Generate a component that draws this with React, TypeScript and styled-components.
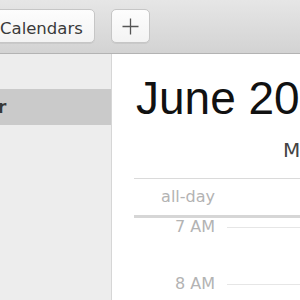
import styled, { createGlobalStyle } from "styled-components";

const GlobalStyle = createGlobalStyle`
    html, body {
        margin: 0;
        padding: 0;
        overflow: hidden;
        background: #fff;
    }
`

const Window = styled.div`
    width: 300px;
    height: 300px;
    overflow: hidden;
    display: flex;
    flex-direction: column;
    font-family: "DejaVu Sans", sans-serif;
`

const Toolbar = styled.div`
    height: 54px;
    flex-shrink: 0;
    display: flex;
    align-items: flex-start;
    gap: 16px;
    padding-top: 9px;
    box-sizing: border-box;
    background: linear-gradient(#e6e6e6, #d3d3d3);
    border-bottom: 1px solid #b3b3b3;
`

const ToolbarButton = styled.button<{ $shift?: number }>`
    height: 34px;
    box-sizing: border-box;
    margin: 0 0 0 ${p => p.$shift ?? 0}px;
    padding: 5px 11px 0;
    border: 1px solid #c6c6c6;
    border-radius: 5px;
    background: linear-gradient(#fdfdfd, #f3f3f3);
    box-shadow: 0 1px 0 rgba(0, 0, 0, .06);
    font-family: "DejaVu Sans", sans-serif;
    font-size: 16.5px;
    line-height: 27px;
    color: #3a3a3a;
    white-space: nowrap;
`

const IconButton = styled(ToolbarButton)`
    width: 39px;
    padding: 0;
    display: flex;
    align-items: center;
    justify-content: center;
`

const Body = styled.div`
    flex: 1;
    display: flex;
    min-height: 0;
`

const Sidebar = styled.div`
    width: 111px;
    flex-shrink: 0;
    padding-top: 35px;
    background: #ededed;
    border-right: 1px solid #d6d6d6;
    overflow: hidden;
`

const SidebarRow = styled.div<{ $selected?: boolean }>`
    height: 36px;
    line-height: 36px;
    background: ${p => p.$selected ? "#cacaca" : "transparent"};
    white-space: nowrap;
`

const SidebarLabel = styled.span`
    display: inline-block;
    margin-left: -84px;
    font-size: 18px;
    font-weight: 700;
    color: #383838;
`

const Main = styled.div`
    flex: 1;
    min-width: 0;
    padding-left: 22px;
    background: #fff;
    overflow: hidden;
`

const Title = styled.h1`
    margin: 21px 0 0 2px;
    font-family: "Liberation Sans", Arial, sans-serif;
    font-size: 46px;
    font-weight: 400;
    line-height: 46px;
    color: #111;
    white-space: nowrap;
`

const DayHeader = styled.div`
    margin-top: 19px;
    padding-left: 149px;
    font-size: 20px;
    line-height: 20px;
    color: #444;
    white-space: nowrap;
`

const Grid = styled.div`
    margin-top: 18px;
    border-top: 1px solid #dadada;
`

const AllDayRow = styled.div`
    height: 36px;
    display: flex;
    border-bottom: 3px solid #d6d6d6;
`

const TimeLabel = styled.div`
    width: 81px;
    flex-shrink: 0;
    text-align: right;
    font-size: 16px;
    color: #b3b3b3;
    white-space: nowrap;
`

const AllDayLabel = styled(TimeLabel)`
    line-height: 36px;
`

const HourList = styled.div`
    padding-top: 9px;
`

const HourRow = styled.div`
    height: 57px;
    display: flex;
    align-items: flex-start;
`

const HourLabel = styled(TimeLabel)`
    line-height: 16px;
    margin-top: -8px;
`

const HourSlot = styled.div`
    flex: 1;
    height: 100%;
    margin-left: 12px;
    border-top: 1px solid #e6e6e6;
`

const hours = ["7 AM", "8 AM"];

function PlusIcon() {
    return (
        <svg width="17" height="17" viewBox="0 0 17 17">
            <path d="M8.5 0.5V16.5M0.5 8.5H16.5" stroke="#555" strokeWidth="1.3" fill="none" />
        </svg>
    )
}

export default function App() {
    return (
        <Window>
            <GlobalStyle />
            <Toolbar>
                <ToolbarButton $shift={-12}>Calendars</ToolbarButton>
                <IconButton aria-label="Add"><PlusIcon /></IconButton>
            </Toolbar>
            <Body>
                <Sidebar>
                    <SidebarRow $selected><SidebarLabel>Calendar</SidebarLabel></SidebarRow>
                </Sidebar>
                <Main>
                    <Title>June 20, 2016</Title>
                    <DayHeader>Monday</DayHeader>
                    <Grid>
                        <AllDayRow>
                            <AllDayLabel>all-day</AllDayLabel>
                        </AllDayRow>
                        <HourList>
                            {hours.map(h => (
                                <HourRow key={h}>
                                    <HourLabel>{h}</HourLabel>
                                    <HourSlot />
                                </HourRow>
                            ))}
                        </HourList>
                    </Grid>
                </Main>
            </Body>
        </Window>
    )
}
